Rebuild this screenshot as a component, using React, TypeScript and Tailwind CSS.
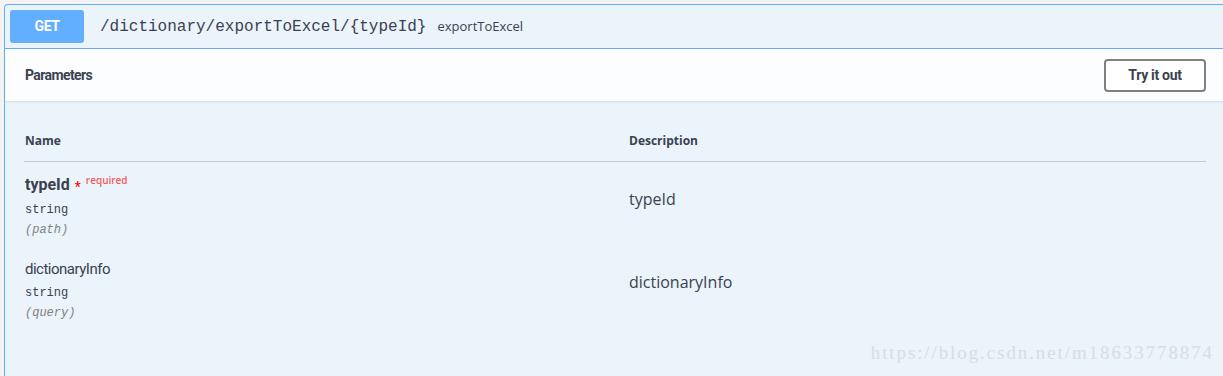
import React from "react";

const params = [
  { name: "typeId", type: "string", where: "(path)", required: true, desc: "typeId" },
  { name: "dictionaryInfo", type: "string", where: "(query)", required: false, desc: "dictionaryInfo" },
];

export default function App() {
  return (
    <div className="relative h-[376px] overflow-hidden bg-[#f3f3f3] pl-[4px] pt-[4px] font-['Open_Sans',sans-serif] text-[#3b4151]">
      <div className="h-[400px] rounded-l-[4px] border border-r-0 border-[#61affe] bg-[#ebf3fb]">
        {/* operation summary */}
        <div className="flex h-[44px] items-center border-b border-[#61affe] px-[5px]">
          <span className="flex h-[33px] w-[74px] items-center justify-center rounded-[3px] bg-[#61affe] font-['Roboto',sans-serif] text-[14px] font-bold tracking-[-0.4px] text-white">
            GET
          </span>
          <span className="ml-[16px] font-['Liberation_Mono',monospace] text-[16px] text-[#3b4151]">
            /dictionary/exportToExcel/&#123;typeId&#125;
          </span>
          <span className="ml-[11px] text-[13px] text-[#3b4151]">exportToExcel</span>
        </div>

        {/* parameters bar */}
        <div className="flex h-[52px] items-center justify-between bg-white/80 pl-[20px] pr-[17px] shadow-[0_1px_2px_rgba(0,0,0,0.1)]">
          <h4 className="font-['Roboto',sans-serif] text-[14px] font-bold tracking-[-0.6px]">Parameters</h4>
          <button className="h-[33px] w-[102px] rounded-[4px] border-2 border-[#808080] bg-white font-['Roboto',sans-serif] text-[14px] font-bold tracking-[-0.3px] text-[#3b4151]">
            Try it out
          </button>
        </div>

        {/* parameters table */}
        <div className="pl-[19px] pr-[17px] pt-[20px]">
          <div className="grid grid-cols-[605px_1fr] border-b border-[#c5cad3] text-[12px] font-bold leading-[16px]">
            <div className="py-[12px] pl-[1px]">Name</div>
            <div className="py-[12px]">Description</div>
          </div>

          {params.map((p, i) => (
            <div key={p.name} className="grid grid-cols-[605px_1fr]">
              <div className={i === 0 ? "pl-[1px] pt-[13px]" : "pl-[1px] pt-[19px]"}>
                <div className="flex h-[20px] items-center font-['Roboto',sans-serif] text-[16px]">
                  {p.required ? (
                    <>
                      <span className="font-bold">{p.name}</span>
                      <span className="ml-[5px] mt-[4px] text-[14px] text-[#ff0000]">*</span>
                      <span className="ml-[5px] -mt-[10px] font-['Open_Sans',sans-serif] text-[10px] font-semibold text-[#f25d5d]">
                        required
                      </span>
                    </>
                  ) : (
                    <span className="text-[15px] tracking-[-0.5px]">{p.name}</span>
                  )}
                </div>
                <div className={i === 0 ? "mt-[5px] font-['Liberation_Mono',monospace] text-[12px] leading-[20px]" : "mt-[4px] font-['Liberation_Mono',monospace] text-[12px] leading-[20px]"}>
                  {p.type}
                </div>
                <div className="font-['Liberation_Mono',monospace] text-[12px] italic leading-[20px] text-[#808080]">
                  {p.where}
                </div>
              </div>
              <div className={i === 0 ? "pt-[25px]" : "pt-[30px]"}>
                <p className="text-[16px] leading-[24px]">{p.desc}</p>
              </div>
            </div>
          ))}
        </div>
      </div>

      {/* watermark */}
      <div className="absolute bottom-[9px] right-[9px] font-['Liberation_Serif',serif] text-[19px] tracking-[1.9px] text-[#dadde1]">
        https://blog.csdn.net/m18633778874
      </div>
    </div>
  );
}
